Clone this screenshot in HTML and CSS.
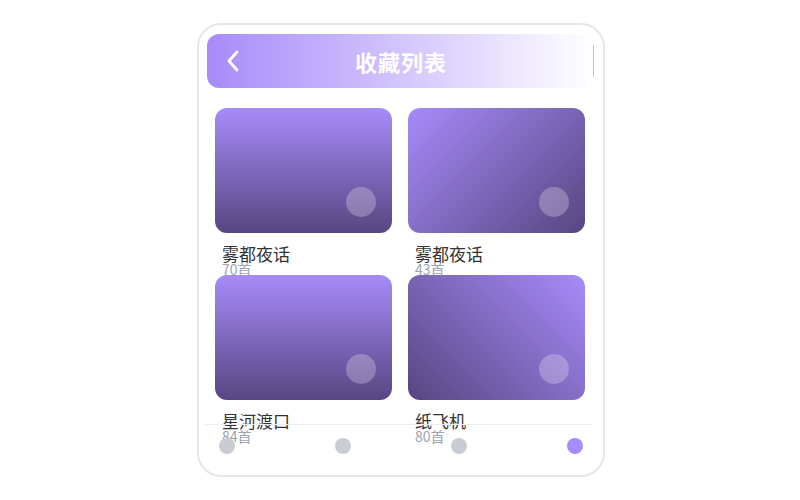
FILE: index.html
```html
<!DOCTYPE html>
<html lang="zh">
<head>
  <meta charset="UTF-8" />
  <meta name="viewport" content="width=device-width, initial-scale=1" />
  <title>收藏列表</title>
  <link rel="stylesheet" href="styles.css">
</head>
<body>

<div class="phone">

  <!-- 顶部标题栏 -->
  <header class="topbar">
    <span class="back">
      <svg width="14" height="22" viewBox="0 0 14 22"><path d="M11 2 L3 11 L11 20" fill="none" stroke="#fff" stroke-width="2.8" stroke-linecap="round" stroke-linejoin="round"/></svg>
    </span>
    <h1>收藏列表</h1>
    <span class="edge"></span>
  </header>

  <main class="grid">
    <div class="item">
      <div class="cover down"><span class="dot"></span></div>
      <div class="meta">
        <div class="name">雾都夜话</div>
        <div class="count">70首</div>
      </div>
    </div>
    <div class="item">
      <div class="cover diag"><span class="dot"></span></div>
      <div class="meta">
        <div class="name">雾都夜话</div>
        <div class="count">43首</div>
      </div>
    </div>
    <div class="item">
      <div class="cover down"><span class="dot"></span></div>
      <div class="meta">
        <div class="name">星河渡口</div>
        <div class="count">84首</div>
      </div>
    </div>
    <div class="item">
      <div class="cover diag-left"><span class="dot"></span></div>
      <div class="meta">
        <div class="name">纸飞机</div>
        <div class="count">80首</div>
      </div>
    </div>
  </main>

  <nav class="tabbar">
    <span class="tab"></span>
    <span class="tab"></span>
    <span class="tab"></span>
    <span class="tab active"></span>
  </nav>

</div>

</body>
</html>
```

FILE: styles.css
```css
body {
  margin: 0;
  height: 100vh;
  padding-left: 2px;
  box-sizing: border-box;
  display: flex;
  align-items: center;
  justify-content: center;
  background: #fff;
  font-family: "Noto Sans CJK SC", "Noto Sans", sans-serif;
}
.phone {
  position: relative;
  width: 404px;
  height: 450px;
  border: 2px solid #e6e6ea;
  border-radius: 24px;
  overflow: hidden;
  background: #fff;
}
.topbar {
  position: relative;
  margin: 9px 8px 0;
  height: 54px;
  border-radius: 12px;
  background: linear-gradient(to right, #a78bfa, #fff);
  display: flex;
  align-items: center;
  justify-content: center;
}
.topbar h1 {
  margin: 0;
  color: #fff;
  font-size: 22px;
  font-weight: bold;
  letter-spacing: 1px;
}
.back {
  position: absolute;
  left: 19px;
  top: 16px;
  display: flex;
}
.edge {
  position: absolute;
  right: 1px;
  top: 11px;
  width: 1px;
  height: 32px;
  background: #c8b8fb;
}
.grid {
  display: grid;
  grid-template-columns: 177px 177px;
  column-gap: 16px;
  padding: 20px 0 0 16px;
}
.cover {
  height: 125px;
  border-radius: 12px;
  display: flex;
  align-items: flex-end;
  justify-content: flex-end;
  padding: 0 16px 16px 0;
  box-sizing: border-box;
}
.cover.down { background: linear-gradient(to bottom, #a78bfa, #574681); }
.cover.diag { background: linear-gradient(135deg, #a78bfa, #574681); }
.cover.diag-left { background: linear-gradient(225deg, #a78bfa, #574681); }
.dot {
  width: 30px;
  height: 30px;
  border-radius: 50%;
  background: rgba(255,255,255,0.25);
}
.meta {
  height: 42px;
  padding: 11px 0 0 7px;
  box-sizing: border-box;
}
.name {
  font-size: 17px;
  line-height: 19px;
  color: #333;
}
.count {
  font-size: 14px;
  line-height: 12px;
  color: #9ca3af;
}
.tabbar {
  position: absolute;
  left: 6px;
  right: 10px;
  bottom: 21px;
  border-top: 1px solid #ececf0;
  padding: 13px 10px 0 14px;
  display: flex;
  justify-content: space-between;
}
.tab {
  width: 16px;
  height: 16px;
  border-radius: 50%;
  background: #c9cdd3;
}
.tab.active {
  background: #a78bfa;
}
```
